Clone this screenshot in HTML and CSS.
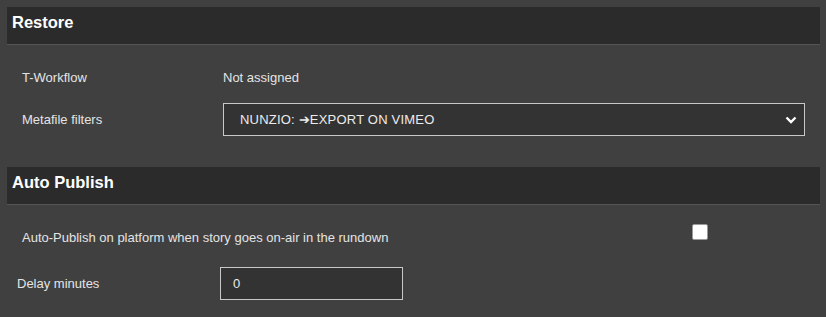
FILE: index.html
```html
<!DOCTYPE html>
<html>
<head>
<meta charset="utf-8">
<link rel="stylesheet" href="styles.css">
</head>
<body>
<div class="page">
  <section class="section">
    <div class="section-head">Restore</div>
    <div class="section-body restore-body">
      <div class="row row-info">
        <div class="label">T-Workflow</div>
        <div class="value">Not assigned</div>
      </div>
      <div class="row row-select">
        <div class="label">Metafile filters</div>
        <div class="select">
          <span class="select-text">NUNZIO: ➔EXPORT ON VIMEO</span>
          <svg class="chevron" width="12" height="8" viewBox="0 0 12 8"><path d="M1.5 1.5 L6 6 L10.5 1.5" fill="none" stroke="#ffffff" stroke-width="2.4"/></svg>
        </div>
      </div>
    </div>
  </section>
  <section class="section">
    <div class="section-head">Auto Publish</div>
    <div class="section-body publish-body">
      <div class="row row-check">
        <div class="label label-wide">Auto-Publish on platform when story goes on-air in the rundown</div>
        <span class="checkbox"></span>
      </div>
      <div class="row row-delay">
        <div class="label label-delay">Delay minutes</div>
        <div class="input">0</div>
      </div>
    </div>
  </section>
</div>
</body>
</html>
```
FILE: styles.css
```css
html, body {
  margin: 0;
  padding: 0;
  background: #404040;
}
body {
  font-family: "Liberation Sans", Arial, sans-serif;
  font-size: 13px;
  color: #e4e4e4;
}
.page {
  padding: 7px 6px 0 7px;
}
.section-head {
  box-sizing: border-box;
  height: 38px;
  line-height: 31px;
  background: #2b2b2b;
  border-bottom: 1px solid #555555;
  padding-left: 5px;
  font-size: 16.5px;
  font-weight: bold;
  color: #ffffff;
}
.restore-body {
  padding: 18px 0 31px 15px;
}
.row {
  display: flex;
  align-items: center;
}
.row-info {
  height: 28px;
  margin-bottom: 12px;
}
.label {
  width: 201px;
  flex: none;
}
.row-select {
  height: 33px;
}
.select {
  box-sizing: border-box;
  width: 582px;
  height: 33px;
  border: 1px solid #c8c8c8;
  background: #333333;
  display: flex;
  align-items: center;
  justify-content: space-between;
  padding: 0 7px 0 16px;
}
.select-text {
  color: #ececec;
  letter-spacing: 0.2px;
}
.chevron {
  display: block;
  margin-top: 1px;
}
.publish-body {
  padding: 14px 0 0 0;
}
.row-check {
  height: 38px;
  padding-left: 15px;
  align-items: flex-start;
}
.label-wide {
  width: 670px;
  line-height: 37px;
}
.checkbox {
  width: 16px;
  height: 16px;
  background: #ffffff;
  border-radius: 2px;
  box-sizing: border-box;
  border: 1px solid #9a9a9a;
  margin-top: 5px;
}
.row-delay {
  margin-top: 10px;
  height: 33px;
  padding-left: 10px;
}
.label-delay {
  width: 203px;
}
.input {
  box-sizing: border-box;
  width: 183px;
  height: 33px;
  border: 1px solid #c8c8c8;
  background: #333333;
  padding-left: 12px;
  line-height: 31px;
  color: #ececec;
}
```
